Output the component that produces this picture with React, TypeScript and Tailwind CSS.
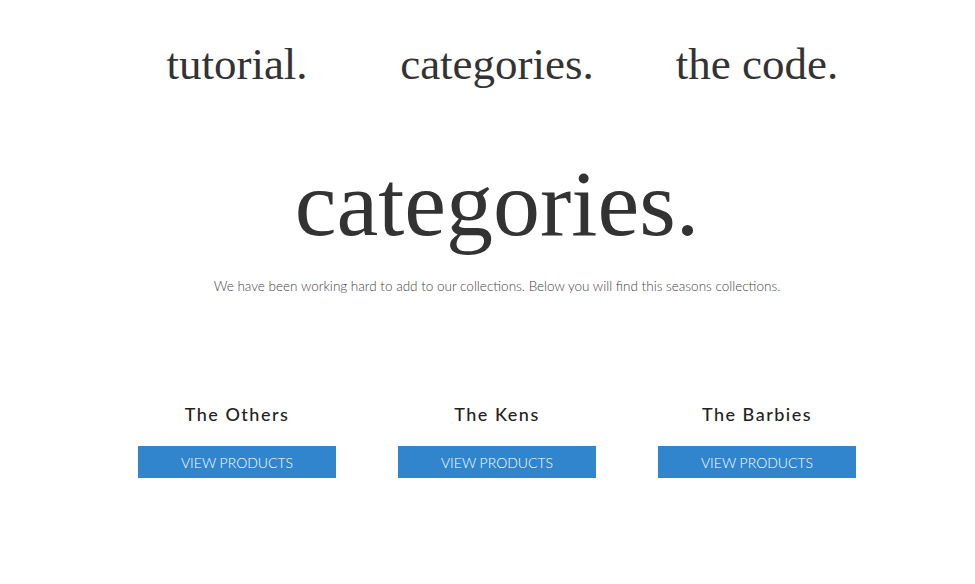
import React from 'react';

const navItems = ['tutorial.', 'categories.', 'the code.'];
const categories = ['The Others', 'The Kens', 'The Barbies'];

const App: React.FC = () => {
  return (
    <div className="min-h-[584px] bg-white text-[#333333]">
      <div className="w-[780px] ml-[107px]">
        {/* top navigation */}
        <nav className="grid grid-cols-3 pt-[36px]">
          {navItems.map((item) => (
            <a
              key={item}
              href="#"
              className="text-center text-[45px] leading-[56px] text-[#333333] font-['Liberation_Serif',serif]"
            >
              {item}
            </a>
          ))}
        </nav>

        {/* hero */}
        <div className="mt-[56px] text-center">
          <h1 className="text-[94px] leading-[110px] text-[#333333] font-['Liberation_Serif',serif]">
            categories.
          </h1>
          <p className="mt-[18px] text-[13.5px] leading-[20px] font-light text-[#444444] font-['Lato','Open_Sans',sans-serif]">
            We have been working hard to add to our collections. Below you will find this seasons collections.
          </p>
        </div>

        {/* collections */}
        <div className="grid grid-cols-3 mt-[104px]">
          {categories.map((name) => (
            <div key={name} className="flex flex-col items-center">
              <h3 className="text-[18px] leading-[28px] tracking-[1.5px] font-medium text-[#222222] font-['Lato','Open_Sans',sans-serif]">
                {name}
              </h3>
              <button className="mt-[18px] w-[198px] h-[32px] bg-[#3185cd] text-white text-[14px] font-light uppercase font-['Lato','Open_Sans',sans-serif]">
                View Products
              </button>
            </div>
          ))}
        </div>
      </div>
    </div>
  );
};

export default App;
